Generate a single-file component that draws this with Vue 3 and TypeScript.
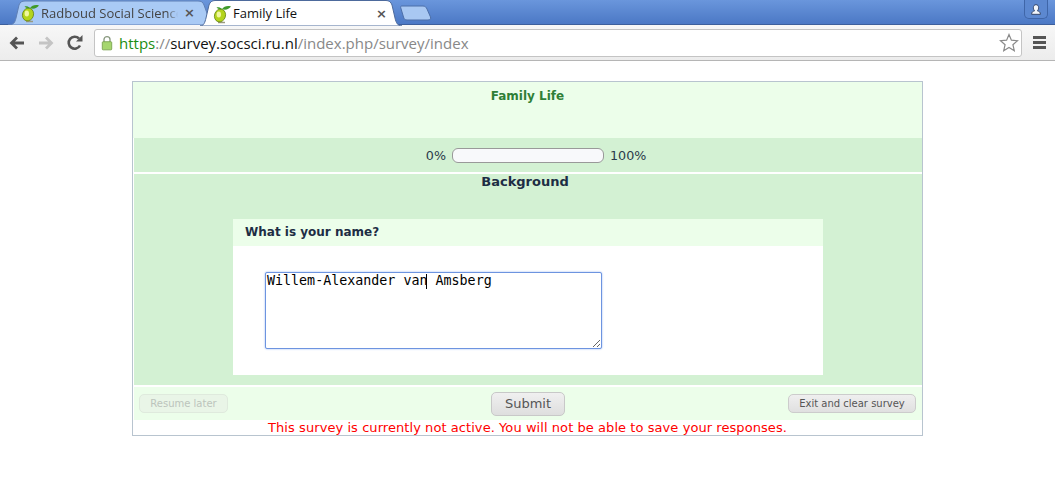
<script setup lang="ts">
const value = 'Willem-Alexander van Amsberg'
</script>

<template>
  <div class="browser">
    <div class="tabstrip">
      <div class="tab back">
        <svg class="tabshape" width="208" height="25" viewBox="0 0 208 25"><path d="M0 25C6 25 7 22 8 18L11 5C12 2 14 1 17 1H190C193 1 195 2 196 5L200 16C202 21 203 25 208 25Z" fill="#a9caf5" stroke="#5f7fb5"/></svg>
        <svg class="fav" width="20" height="20" viewBox="0 0 20 20"><use href="#lime" /></svg>
        <span class="tabtitle clip">Radboud Social Science</span>
        <span class="close">×</span>
      </div>
      <div class="tab front">
        <svg class="tabshape" width="202" height="26" viewBox="0 0 202 26"><path d="M0 26C4 26 5 22 6 18L9 5C10 2 12 .5 15 .5H186C189 .5 191 2 192 5L195 18C196 23 198 26 202 26Z" fill="#fff" stroke="#4d6a9c"/></svg>
        <svg class="fav" width="20" height="20" viewBox="0 0 20 20">
          <defs>
            <g id="lime">
              <path d="M6 18.500H13" stroke="#9a9a80" stroke-width="1.500"/>
              <ellipse cx="8" cy="11.500" rx="5.500" ry="6.500" transform="rotate(18 8 11.500)" fill="#b4d41c" stroke="#5f7d10" stroke-width=".7"/>
              <ellipse cx="6.800" cy="10.500" rx="2.200" ry="3" fill="#f0f7a0"/>
              <path d="M10 5C12 2.500 15 1.500 19 2.500C17 5.500 13 6.500 10 5Z" fill="#3f9a2a"/>
              <path d="M10 5C8.500 3.500 6.500 3 4.500 3.500C6 5 8 5.800 10 5Z" fill="#3f9a2a"/>
            </g>
          </defs>
          <use href="#lime" />
        </svg>
        <span class="tabtitle active">Family Life</span>
        <span class="close">×</span>
      </div>
      <svg class="newtab" width="32" height="16" viewBox="0 0 32 16"><path d="M1.500 1H23C25 1 26 2 27 4L30.500 12C31 14 30 15 28 15H7C5 15 4 14 3.500 12L.8 3C.5 2 .8 1 1.500 1Z" fill="#a9c8f2" stroke="#4d6fa8"/></svg>
      <div class="spacer"></div>
      <div class="profile">
        <svg width="14" height="13" viewBox="0 0 16 14"><path d="M8 1.500C10 1.500 11 3 11 5C11 7 10 8 9.500 8.500C11.500 9 13 9.800 13 12.500H3C3 9.800 4.500 9 6.500 8.500C6 8 5 7 5 5C5 3 6 1.500 8 1.500Z" fill="#f2f6fc" stroke="#2b3c5c"/></svg>
      </div>
    </div>
    <div class="toolbar">
      <svg class="navicon" width="18" height="16" viewBox="0 0 18 16"><path d="M16 8H4M9 2.500L3.500 8L9 13.500" fill="none" stroke="#555" stroke-width="2.800"/></svg>
      <svg class="navicon" width="18" height="16" viewBox="0 0 18 16"><path d="M2 8H14M9 2.500L14.500 8L9 13.500" fill="none" stroke="#c4c4c4" stroke-width="2.800"/></svg>
      <svg class="navicon" width="18" height="18" viewBox="0 0 18 18"><path d="M14 11.500A6 6 0 1 1 13 4.500" fill="none" stroke="#555" stroke-width="2.600"/><path d="M10 7.500H16.500V1Z" fill="#555"/></svg>
      <div class="omnibox">
        <svg class="lock" width="12" height="16" viewBox="0 0 14 18"><path d="M3.500 8V5A3.500 3.500 0 0 1 10.500 5V8" fill="none" stroke="#8a9a80" stroke-width="1.600"/><rect x="1.500" y="7.500" width="11" height="9.500" rx="1" fill="#a6d66f" stroke="#76a04c"/></svg>
        <span class="url"><span class="scheme">https</span><span class="dim">://</span><span class="host">survey.socsci.ru.nl</span><span class="dim">/index.php/survey/index</span></span>
        <svg class="star" width="20" height="19" viewBox="0 0 20 19"><path d="M10 1.500L12.400 7.200L18.500 7.700L13.900 11.700L15.300 17.700L10 14.500L4.700 17.700L6.100 11.700L1.500 7.700L7.600 7.200Z" fill="#fff" stroke="#8a8a8a" stroke-width="1.200"/></svg>
      </div>
      <div class="menu"><i></i><i></i><i></i></div>
    </div>

    <main class="page">
      <div class="survey">
        <header class="welcome">Family Life</header>
        <div class="progress">
          <span class="pct-left">0%</span>
          <div class="bar"></div>
          <span>100%</span>
        </div>
        <section class="group">
          <h2>Background</h2>
          <div class="question">
            <div class="qtitle">What is your name?</div>
            <div class="answer">
              <div class="field">
                <textarea class="input" :value="value" spellcheck="false"></textarea>
                <span class="caret"></span>
              </div>
            </div>
          </div>
        </section>
        <div class="buttons">
          <button class="small disabled">Resume later</button>
          <button class="submit">Submit</button>
          <button class="small exit">Exit and clear survey</button>
        </div>
        <p class="notice">This survey is currently not active. You will not be able to save your responses.</p>
      </div>
    </main>
  </div>
</template>

<style scoped>
.browser { width: 1055px; height: 486px; overflow: hidden; background: #fff; display: flex; flex-direction: column; }
.tabstrip { height: 25px; flex: none; display: flex; align-items: flex-end; background: linear-gradient(#6a96dc, #4a77c4); box-shadow: inset 0 -1px 0 #3d5f9c; padding-left: 8px; }
.tab { position: relative; width: 192px; height: 25px; flex: none; display: flex; align-items: center; font-family: "Open Sans", sans-serif; font-size: 13px; }
.tabshape { position: absolute; left: 0; top: 0; }
.tab.front { height: 26px; margin-bottom: -1px; z-index: 1; }
.fav { position: relative; margin-left: 12px; margin-top: 1px; flex: none; }
.tabtitle { position: relative; margin-left: 1px; width: 138px; white-space: nowrap; overflow: hidden; color: #444; }
.tabtitle.clip { -webkit-mask-image: linear-gradient(90deg, #000 126px, transparent 137px); mask-image: linear-gradient(90deg, #000 126px, transparent 137px); }
.tabtitle.active { color: #111; }
.close { position: relative; margin-left: 5px; font: bold 13px "DejaVu Sans", sans-serif; color: #555; }
.newtab { margin-left: 8px; margin-bottom: 4px; flex: none; position: relative; z-index: 2; }
.spacer { flex: 1; }
.profile { width: 24px; height: 19px; margin-right: 7px; align-self: flex-start; display: flex; align-items: center; justify-content: center; border: 1px solid #3f66a8; border-top: 0; border-radius: 0 0 5px 5px; background: #5c88d0; box-sizing: border-box; }
.toolbar { height: 36px; flex: none; box-sizing: border-box; display: flex; align-items: center; padding: 0 0 0 8px; background: linear-gradient(#f7f7f7, #ececec); border-bottom: 1px solid #b5b5b5; }
.navicon { margin-right: 11px; flex: none; }
.navicon:nth-child(3) { margin-right: 10px; }
.omnibox { width: 928px; height: 28px; box-sizing: border-box; display: flex; align-items: center; background: #fff; border: 1px solid #c4c4c4; border-radius: 3px; padding: 0 2px 0 6px; flex: none; }
.lock { flex: none; margin-right: 6px; }
.url { flex: 1; font-family: "Open Sans", sans-serif; font-size: 15px; white-space: nowrap; }
.scheme { color: #1c8e12; }
.dim { color: #888; }
.host { color: #111; }
.star { flex: none; }
.menu { margin-left: 11px; display: flex; flex-direction: column; gap: 2px; }
.menu i { display: block; width: 13px; height: 3px; background: #555; }

.page { flex: 1; padding-top: 20px; }
.survey { width: 789px; margin: 0 0 0 132px; border: 1px solid #b8c4cf; background: #fff; font-family: "DejaVu Sans", sans-serif; font-size: 13px; color: #233; }
.welcome { height: 56px; box-sizing: border-box; padding-top: 6px; background: #ecfeea; text-align: center; font-size: 12px; font-weight: bold; color: #2f7f37; line-height: 16px; }
.progress { margin-left: 1px; height: 34px; display: grid; grid-template-columns: 1fr 152px 1fr; align-items: center; column-gap: 6px; background: #d3f1d3; color: #2a3a4a; font-size: 12.7px; }
.pct-left { justify-self: end; }
.bar { height: 15px; box-sizing: border-box; border: 1px solid #999; border-radius: 6px; background: #f8f9fb; }
.group { margin: 2px 0 2px 1px; height: 211px; box-sizing: border-box; background: #d3f1d3; display: flex; flex-direction: column; align-items: center; }
.group h2 { margin: 0 0 30px -6px; font-size: 13px; line-height: 15px; color: #1d2d44; }
.question { width: 590px; height: 156px; background: #fff; }
.qtitle { height: 27px; box-sizing: border-box; padding-left: 12px; background: #ecfeea; font-size: 12px; font-weight: bold; line-height: 27px; color: #1d2d44; }
.answer { padding: 26px 0 0 32px; }
.field { position: relative; width: 337px; height: 77px; }
.input { display: block; width: 337px; height: 77px; margin: 0; padding: 0 1px; box-sizing: border-box; border: 1px solid #6d94e0; border-radius: 2px; outline: 0; box-shadow: 0 0 2px #8fb0ee; background: #fff; font-family: "DejaVu Sans Mono", monospace; font-size: 13.33px; color: #000; }
.caret { position: absolute; left: 161px; top: 2px; width: 1px; height: 15px; background: #000; }
.buttons { margin-left: 1px; height: 33px; box-sizing: border-box; padding: 0 6px 0 5px; display: grid; grid-template-columns: 1fr auto 1fr; align-items: center; background: #ecfeea; }
button { font-family: "DejaVu Sans", sans-serif; margin: 0; box-sizing: border-box; }
.small { height: 19px; width: 128px; padding: 0; font-size: 10px; color: #555; background: linear-gradient(#efefef, #e0e0e0); border: 1px solid #ccc; border-radius: 5px; }
.exit { justify-self: end; }
.small.disabled { width: 89px; color: #bcc4bc; background: #e9f5e7; border-color: #dfeadd; }
.submit { width: 74px; height: 24px; margin-left: 1px; font-size: 13px; color: #555; background: linear-gradient(#f0f0f0, #dedede); border: 1px solid #c8c8c8; border-radius: 5px; }
.notice { margin: 0; height: 15px; text-align: center; color: #f00; font-size: 13px; line-height: 15px; letter-spacing: .065px; }
</style>
